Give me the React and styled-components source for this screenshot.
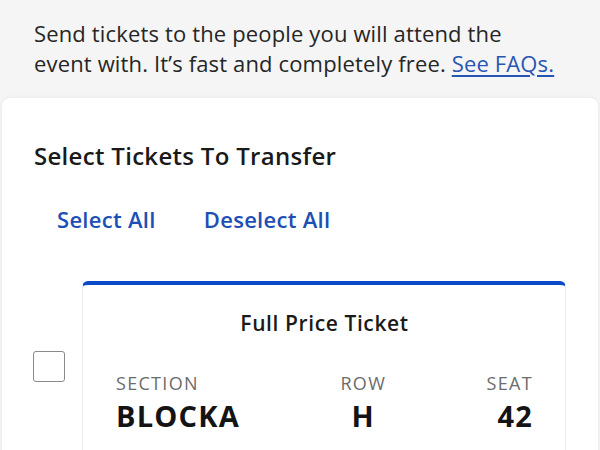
import React, { useState } from "react";
import styled, { createGlobalStyle } from "styled-components";

const GlobalStyle = createGlobalStyle`
    html, body {
        margin: 0;
        padding: 0;
        background: #f5f5f5;
    }
    body {
        font-family: "Open Sans", "Liberation Sans", sans-serif;
        color: #262626;
    }
`;

const tickets = [
    { id: 1, kind: "Full Price Ticket", section: "BLOCKA", row: "H", seat: "42" },
];

function App() {
    const [selected, setSelected] = useState([]);

    const toggle = (id) =>
        setSelected((s) => (s.includes(id) ? s.filter((x) => x !== id) : [...s, id]));

    return (
        <>
            <GlobalStyle />
            <Page>
                <Intro>
                    Send tickets to the people you will attend the
                    <br />
                    event with. It’s fast and completely free.{" "}
                    <FaqLink href="#">See FAQs.</FaqLink>
                </Intro>
                <Panel>
                    <Heading>Select Tickets To Transfer</Heading>
                    <Actions>
                        <TextButton onClick={() => setSelected(tickets.map((t) => t.id))}>
                            Select All
                        </TextButton>
                        <TextButton onClick={() => setSelected([])}>Deselect All</TextButton>
                    </Actions>
                    {tickets.map((t) => (
                        <TicketRow key={t.id}>
                            <Check
                                type="checkbox"
                                checked={selected.includes(t.id)}
                                onChange={() => toggle(t.id)}
                            />
                            <Card>
                                <CardTitle>{t.kind}</CardTitle>
                                <Fields>
                                    <Field>
                                        <Label>SECTION</Label>
                                        <Value>{t.section}</Value>
                                    </Field>
                                    <Field $align="center">
                                        <Label>ROW</Label>
                                        <Value>{t.row}</Value>
                                    </Field>
                                    <Field $align="right">
                                        <Label>SEAT</Label>
                                        <Value>{t.seat}</Value>
                                    </Field>
                                </Fields>
                            </Card>
                        </TicketRow>
                    ))}
                </Panel>
            </Page>
        </>
    );
}

export default App;

const Page = styled.div`
    min-height: 100vh;
    display: flex;
    flex-direction: column;
`;
const Intro = styled.p`
    margin: 0;
    padding: 18px 20px 20px 34px;
    font-size: 22px;
    line-height: 30px;
    letter-spacing: 0.15px;
    white-space: nowrap;
    color: #262626;
`;
const FaqLink = styled.a`
    color: #2756b3;
    text-decoration: underline;
    text-underline-offset: 3px;
`;
const Panel = styled.section`
    flex: 1;
    margin: 0 2px;
    padding: 43px 32px 0 0;
    background: #fff;
    border-radius: 8px 8px 0 0;
    box-shadow: 0 0 4px rgba(0, 0, 0, 0.07);
`;
const Heading = styled.h2`
    margin: 0 0 0 32px;
    font-size: 24px;
    line-height: 30px;
    letter-spacing: 0.3px;
    font-weight: 600;
    color: #1a1a1a;
`;
const Actions = styled.div`
    display: flex;
    gap: 48px;
    margin: 34px 0 0 55px;
`;
const TextButton = styled.button`
    padding: 0;
    border: none;
    background: none;
    font-family: inherit;
    font-size: 22px;
    line-height: 28px;
    letter-spacing: 0.3px;
    font-weight: 600;
    color: #1d4fb4;
    cursor: pointer;
`;
const TicketRow = styled.div`
    display: flex;
    align-items: flex-start;
    gap: 17px;
    margin-top: 48px;
    padding-left: 31px;
`;
const Check = styled.input`
    appearance: none;
    flex: none;
    width: 32px;
    height: 31px;
    margin: 70px 0 0;
    border: 1.5px solid #8a8a8a;
    border-radius: 3px;
    background: #fff;
    &:checked {
        background: #1d4fb4;
        border-color: #1d4fb4;
    }
`;
const Card = styled.div`
    flex: 1;
    padding: 25px 32px 30px 33px;
    background: #fff;
    border: 1px solid #ececec;
    border-top: 4px solid #0b4bc7;
    border-radius: 6px 6px 0 0;
`;
const CardTitle = styled.div`
    text-align: center;
    font-size: 21px;
    line-height: 26px;
    letter-spacing: 0.6px;
    font-weight: 600;
    color: #1a1a1a;
`;
const Fields = styled.div`
    display: flex;
    justify-content: space-between;
    margin-top: 36px;
`;
const Field = styled.div`
    display: flex;
    flex-direction: column;
    gap: 5px;
    text-align: ${(p) => p.$align || "left"};
`;
const Label = styled.span`
    font-size: 18px;
    line-height: 22px;
    letter-spacing: 1.3px;
    color: #6b6b6b;
`;
const Value = styled.span`
    font-size: 29px;
    line-height: 34px;
    letter-spacing: 1.2px;
    font-weight: 700;
    color: #141414;
`;
